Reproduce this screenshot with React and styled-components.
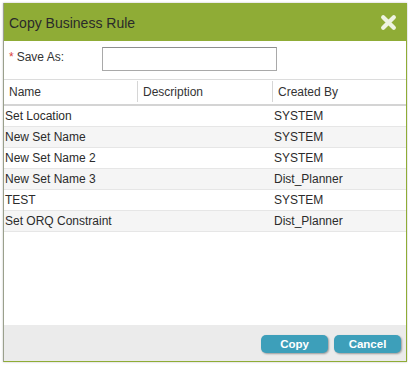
import React from "react";
import styled, { createGlobalStyle } from "styled-components";

const Global = createGlobalStyle`
  html, body { margin: 0; padding: 0; background: #ffffff; }
  body { font-family: "Liberation Sans", Arial, sans-serif; }
`;

const Page = styled.div`
  width: 408px;
  height: 365px;
  padding: 3px 1px 0 3px;
  box-sizing: border-box;
`;

const Dialog = styled.div`
  width: 404px;
  height: 359px;
  box-sizing: border-box;
  border: 1px solid #8fac36;
  border-top: none;
  border-left-color: #9aa08c;
  display: flex;
  flex-direction: column;
  background: #fff;
  box-shadow: 0 0 2px rgba(0,0,0,0.25);
`;

const Header = styled.div`
  height: 38px;
  flex: none;
  background: #8fac36;
  display: flex;
  align-items: center;
  justify-content: space-between;
  padding: 0 9px 0 5px;
`;

const Title = styled.div`
  font-size: 14px;
  color: #2a2a2a;
  padding-top: 1px;
`;

const Close = styled.svg`
  width: 17px;
  height: 17px;
  display: block;
`;

const FormRow = styled.div`
  height: 38px;
  flex: none;
  display: flex;
  align-items: center;
  padding-left: 5px;
  padding-bottom: 3px;
  box-sizing: border-box;
`;

const Label = styled.label`
  width: 93px;
  font-size: 12px;
  color: #333;
  padding-bottom: 3px;
`;

const Req = styled.span`
  color: #d9413a;
  margin-right: 3px;
`;

const Input = styled.input`
  width: 175px;
  height: 24px;
  box-sizing: border-box;
  border: 1px solid #a9a9a9;
  border-top-color: #8e8e8e;
  outline: none;
  margin: 0;
`;

const Grid = styled.div`
  flex: 1;
  display: flex;
  flex-direction: column;
  background: #fff;
`;

const GridHead = styled.div`
  display: grid;
  grid-template-columns: 133px 135px 1fr;
  height: 27px;
  flex: none;
  border-top: 1px solid #dcdcdc;
  border-bottom: 2px solid #d4d4d4;
  box-sizing: border-box;
`;

const HeadCell = styled.div`
  font-size: 12px;
  color: #333;
  display: flex;
  align-items: center;
  padding-left: 5px;
  border-left: ${p => (p.$first ? "none" : "1px solid #d6d6d6")};
  margin: 1px 0 2px;
`;

const Row = styled.div`
  display: grid;
  grid-template-columns: 268px 1fr;
  height: 21px;
  flex: none;
  background: ${p => (p.$alt ? "#f5f5f5" : "#ffffff")};
  border-bottom: 1px solid #e6e6e6;
  box-sizing: border-box;
  font-size: 12px;
  color: #2b2b2b;
  align-items: center;
`;

const Cell = styled.div`
  padding-left: ${p => p.$pad}px;
  white-space: nowrap;
`;

const Footer = styled.div`
  height: 35px;
  flex: none;
  background: #ebebeb;
  display: flex;
  justify-content: flex-end;
  align-items: center;
  gap: 6px;
  padding-right: 5px;
  padding-top: 1px;
`;

const Button = styled.button`
  width: 67px;
  height: 18px;
  border: none;
  border-radius: 5px;
  background: #3d9fba;
  color: #fff;
  font-family: "Liberation Sans", Arial, sans-serif;
  font-weight: bold;
  font-size: 11.5px;
  padding: 0;
  box-shadow: 1px 1px 2px rgba(0,0,0,0.35);
`;

const rows = [
  ["Set Location", "SYSTEM"],
  ["New Set Name", "SYSTEM"],
  ["New Set Name 2", "SYSTEM"],
  ["New Set Name 3", "Dist_Planner"],
  ["TEST", "SYSTEM"],
  ["Set ORQ Constraint", "Dist_Planner"],
];

export default function App() {
  return (
    <>
      <Global />
      <Page>
        <Dialog>
          <Header>
            <Title>Copy Business Rule</Title>
            <Close viewBox="0 0 16 16">
              <path d="M3 3 L13 13 M13 3 L3 13" stroke="#eef3e2" strokeWidth="4" strokeLinecap="round" />
            </Close>
          </Header>
          <FormRow>
            <Label><Req>*</Req>Save As:</Label>
            <Input type="text" />
          </FormRow>
          <Grid>
            <GridHead>
              <HeadCell $first>Name</HeadCell>
              <HeadCell>Description</HeadCell>
              <HeadCell>Created By</HeadCell>
            </GridHead>
            {rows.map((r, i) => (
              <Row key={i} $alt={i % 2 === 1}>
                <Cell $pad={1}>{r[0]}</Cell>
                <Cell $pad={2}>{r[1]}</Cell>
              </Row>
            ))}
          </Grid>
          <Footer>
            <Button>Copy</Button>
            <Button>Cancel</Button>
          </Footer>
        </Dialog>
      </Page>
    </>
  );
}
